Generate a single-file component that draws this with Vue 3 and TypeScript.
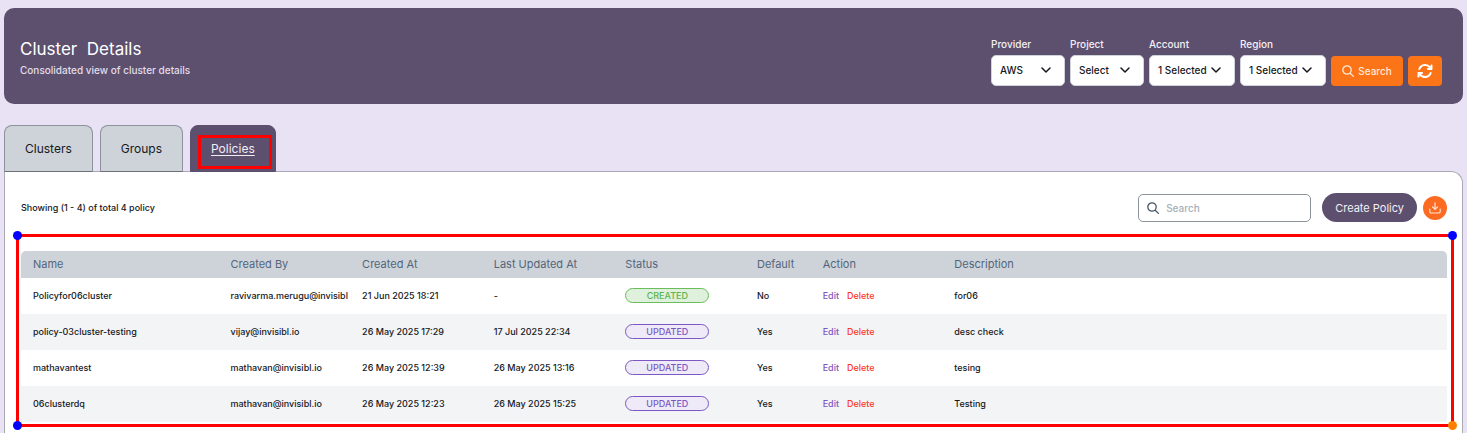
<script setup lang="ts">
import { ref } from 'vue'

interface Filter {
  id: string
  label: string
  value: string
  wide: boolean
}

interface Policy {
  name: string
  createdBy: string
  createdAt: string
  updatedAt: string
  status: 'CREATED' | 'UPDATED'
  isDefault: string
  description: string
}

const filters: Filter[] = [
  { id: 'provider', label: 'Provider', value: 'AWS', wide: false },
  { id: 'project', label: 'Project', value: 'Select', wide: false },
  { id: 'account', label: 'Account', value: '1 Selected', wide: true },
  { id: 'region', label: 'Region', value: '1 Selected', wide: true },
]

const tabs: string[] = ['Clusters', 'Groups', 'Policies']
const activeTab = ref('Policies')
const query = ref('')
const title = 'Cluster \u00a0Details'

const policies: Policy[] = [
  { name: 'Policyfor06cluster', createdBy: 'ravivarma.merugu@invisibl', createdAt: '21 Jun 2025 18:21', updatedAt: '-', status: 'CREATED', isDefault: 'No', description: 'for06' },
  { name: 'policy-03cluster-testing', createdBy: 'vijay@invisibl.io', createdAt: '26 May 2025 17:29', updatedAt: '17 Jul 2025 22:34', status: 'UPDATED', isDefault: 'Yes', description: 'desc check' },
  { name: 'mathavantest', createdBy: 'mathavan@invisibl.io', createdAt: '26 May 2025 12:39', updatedAt: '26 May 2025 13:16', status: 'UPDATED', isDefault: 'Yes', description: 'tesing' },
  { name: '06clusterdq', createdBy: 'mathavan@invisibl.io', createdAt: '26 May 2025 12:23', updatedAt: '26 May 2025 15:25', status: 'UPDATED', isDefault: 'Yes', description: 'Testing' },
]
</script>

<template>
  <div class="page">
    <header class="banner">
      <div class="heading">
        <h1>{{ title }}</h1>
        <p>Consolidated view of cluster details</p>
      </div>
      <form class="filters" @submit.prevent>
        <div v-for="f in filters" :key="f.id" class="field" :class="{ wide: f.wide }">
          <label :for="f.id">{{ f.label }}</label>
          <div class="select-box">
            <select :id="f.id">
              <option>{{ f.value }}</option>
            </select>
            <svg class="chevron" viewBox="0 0 10 6" aria-hidden="true"><path d="M1 1l4 4 4-4" /></svg>
          </div>
        </div>
        <button class="orange search-btn" type="submit">
          <svg class="icon-12" viewBox="0 0 12 12" aria-hidden="true"><circle cx="5" cy="5" r="4.2" /><path d="M8.2 8.2l3.2 3.2" /></svg>
          <span>Search</span>
        </button>
        <button class="orange refresh-btn" type="button" aria-label="Refresh">
          <svg viewBox="0 0 512 512" aria-hidden="true">
            <path d="M105.100 202.600c7.700-21.800 20.200-42.300 37.800-59.800c62.500-62.500 163.800-62.500 226.300 0L386.300 160 352 160c-17.700 0-32 14.300-32 32s14.300 32 32 32l111.500 0c0 0 0 0 0 0l.4 0c17.700 0 32-14.300 32-32l0-112c0-17.700-14.300-32-32-32s-32 14.300-32 32l0 35.200L414.400 97.600c-87.500-87.500-229.300-87.500-316.800 0C73.200 122 55.600 150.700 44.800 181.400c-5.900 16.700 2.900 34.900 19.500 40.800s34.900-2.900 40.800-19.500zM39 289.300c-5 1.500-9.800 4.200-13.700 8.200c-4 4-6.700 8.800-8.100 14c-.3 1.200-.6 2.500-.8 3.800c-.3 1.700-.4 3.400-.4 5.100L16 432c0 17.700 14.300 32 32 32s32-14.300 32-32l0-35.100 17.600 17.500c87.500 87.400 229.300 87.400 316.700 0c24.400-24.400 42.100-53.100 52.900-83.800c5.900-16.700-2.900-34.900-19.500-40.800s-34.900 2.900-40.800 19.500c-7.700 21.800-20.200 42.300-37.800 59.800c-62.500 62.500-163.800 62.500-226.300 0l-.1-.1L125.600 352l34.400 0c17.700 0 32-14.300 32-32s-14.300-32-32-32L48.400 288c-1.600 0-3.200 .1-4.800 .3s-3.100 .5-4.600 1z" />
          </svg>
        </button>
      </form>
    </header>

    <nav class="tabs">
      <button
        v-for="t in tabs"
        :key="t"
        type="button"
        class="tab"
        :class="{ active: t === activeTab }"
        @click="activeTab = t"
      >
        <span>{{ t }}</span>
      </button>
    </nav>

    <main class="panel">
      <div class="toolbar">
        <p class="count">Showing (1 - 4) of total 4 policy</p>
        <div class="search-box">
          <svg class="icon-12" viewBox="0 0 12 12" aria-hidden="true"><circle cx="5" cy="5" r="4.2" /><path d="M8.200 8.200l3.200 3.200" /></svg>
          <input v-model="query" type="text" placeholder="Search" aria-label="Search policies" />
        </div>
        <button class="create" type="button">Create Policy</button>
        <button class="download" type="button" aria-label="Download">
          <svg viewBox="0 0 12 12" aria-hidden="true"><path d="M6 .8v6.400M3.600 5L6 7.400 8.400 5M.8 7.200v2.400a1.400 1.400 0 0 0 1.400 1.400h7.600a1.400 1.400 0 0 0 1.400-1.400V7.200" /></svg>
        </button>
      </div>

      <div class="outlined">
        <table>
          <colgroup>
            <col class="w-name" />
            <col class="w-mid" />
            <col class="w-mid" />
            <col class="w-mid" />
            <col class="w-mid" />
            <col class="w-small" />
            <col class="w-mid" />
            <col />
          </colgroup>
          <thead>
            <tr>
              <th>Name</th>
              <th>Created By</th>
              <th>Created At</th>
              <th>Last Updated At</th>
              <th>Status</th>
              <th>Default</th>
              <th>Action</th>
              <th>Description</th>
            </tr>
          </thead>
          <tbody>
            <tr v-for="p in policies" :key="p.name">
              <td>{{ p.name }}</td>
              <td>{{ p.createdBy }}</td>
              <td>{{ p.createdAt }}</td>
              <td>{{ p.updatedAt }}</td>
              <td><span class="badge" :class="p.status.toLowerCase()">{{ p.status }}</span></td>
              <td>{{ p.isDefault }}</td>
              <td>
                <div class="actions">
                  <a href="#" class="edit">Edit</a>
                  <a href="#" class="delete">Delete</a>
                </div>
              </td>
              <td>{{ p.description }}</td>
            </tr>
          </tbody>
        </table>
        <i class="handle top left"></i>
        <i class="handle top right"></i>
        <i class="handle bottom left"></i>
        <i class="handle bottom right last"></i>
      </div>
    </main>
  </div>
</template>

<style>
body {
  background: #e9e2f4;
}
</style>

<style scoped>
.page {
  box-sizing: border-box;
  display: flex;
  flex-direction: column;
  min-height: 100vh;
  padding: 8px 4px 0;
  background: #e9e2f4;
  color: #16181d;
  font-family: Inter, "Liberation Sans", sans-serif;
  font-size: 9px;
}
.page *,
.page *::before {
  box-sizing: border-box;
}
h1,
p {
  margin: 0;
  font-weight: 400;
}
button,
select,
input {
  font-family: inherit;
  margin: 0;
}
button {
  cursor: pointer;
}
.banner {
  display: flex;
  align-items: center;
  justify-content: space-between;
  min-height: 96px;
  padding: 0 21px 0 16px;
  border-radius: 10px;
  background: #5d4f6e;
  color: #fff;
}
.heading {
  display: flex;
  flex-direction: column;
  gap: 2px;
  padding-top: 2px;
}
h1 {
  font-size: 17px;
  line-height: 24px;
}
.heading p {
  font-size: 10px;
  font-weight: 500;
  line-height: 14px;
  color: #e2dde8;
}
.filters {
  display: flex;
  align-items: flex-end;
  gap: 5px;
  padding-top: 10px;
}
.field {
  display: flex;
  flex-direction: column;
  gap: 4px;
  width: 74px;
}
.field.wide {
  width: 86px;
}
.field label {
  font-size: 10px;
  font-weight: 500;
  line-height: 14px;
  color: #f3f0f6;
}
.select-box {
  display: grid;
  align-items: center;
}
.select-box > * {
  grid-area: 1 / 1;
}
select {
  appearance: none;
  width: 100%;
  height: 31px;
  padding: 0 8px;
  border: 1px solid #cfd3da;
  border-radius: 5px;
  background: #fff;
  color: #16181d;
  font-size: 10px;
  font-weight: 500;
}
.chevron {
  justify-self: end;
  width: 10px;
  height: 6px;
  margin-right: 14px;
  fill: none;
  stroke: #16181d;
  stroke-width: 1.5;
  stroke-linecap: round;
  stroke-linejoin: round;
  pointer-events: none;
}
.orange {
  display: flex;
  align-items: center;
  justify-content: center;
  height: 30px;
  padding: 0;
  border: 0;
  border-radius: 4px;
  background: #fb7417;
  color: #ffe9d6;
  font-size: 10px;
  font-weight: 500;
}
.search-btn {
  gap: 4px;
  width: 72px;
}
.refresh-btn {
  width: 34px;
}
.refresh-btn svg {
  width: 16px;
  height: 16px;
  fill: #fff;
}
.icon-12 {
  flex: none;
  width: 12px;
  height: 12px;
  fill: none;
  stroke: currentColor;
  stroke-width: 1.3;
  stroke-linecap: round;
}
.tabs {
  display: flex;
  gap: 7px;
  margin-top: 21px;
}
.tab {
  position: relative;
  height: 47px;
  padding: 0 20px;
  border: 1px solid #8d939d;
  border-bottom-color: #6b7079;
  border-radius: 8px 8px 0 0;
  background: #ced3da;
  color: #16181d;
  font-size: 12px;
}
.tab.active {
  border-color: #5d4f6e;
  background: #5d4f6e;
  color: #f0edf3;
  text-decoration: underline;
  text-underline-offset: 2px;
}
.tab.active::before {
  content: "";
  position: absolute;
  inset: 9px 3px 2px 7px;
  border: 3px solid #f00;
}
.panel {
  flex: 1;
  margin-top: -1px;
  padding: 21px 8px 5px 11px;
  border: 1px solid #a9a9b6;
  border-bottom: 0;
  border-radius: 0 12px 0 0;
  background: #fff;
}
.toolbar {
  display: flex;
  align-items: center;
  padding: 0 7px 0 5px;
}
.count {
  flex: 1;
  font-weight: 500;
}
.search-box {
  display: flex;
  align-items: center;
  gap: 7px;
  width: 173px;
  height: 28px;
  padding: 0 8px;
  border: 1px solid #8d949e;
  border-radius: 5px;
  color: #46566a;
}
.search-box input {
  flex: 1;
  min-width: 0;
  padding: 0;
  border: 0;
  outline: 0;
  background: none;
  color: #16181d;
  font-size: 10px;
  font-weight: 500;
}
.search-box input::placeholder {
  color: #a5afbc;
}
.create {
  height: 29px;
  margin-left: 11px;
  padding: 0 13px;
  border: 0;
  border-radius: 15px;
  background: #5d4f6e;
  color: #f3f0f6;
  font-size: 11px;
}
.download {
  display: grid;
  place-items: center;
  width: 24px;
  height: 24px;
  margin-left: 6px;
  padding: 0;
  border: 0;
  border-radius: 50%;
  background: #fd6b22;
}
.download svg {
  width: 12px;
  height: 12px;
  fill: none;
  stroke: #ffe3d3;
  stroke-width: 1.2;
  stroke-linecap: round;
  stroke-linejoin: round;
}
.outlined {
  position: relative;
  margin-top: 12px;
  padding: 14px 4px 2px 2px;
  border: 3px solid #f00;
}
.handle {
  position: absolute;
  width: 9px;
  height: 9px;
  border-radius: 50%;
  background: #00f;
}
.handle.last {
  background: #ff8000;
}
.top {
  top: -6px;
}
.bottom {
  bottom: -6px;
}
.left {
  left: -6px;
}
.right {
  right: -6px;
}
table {
  width: 100%;
  table-layout: fixed;
  border-collapse: separate;
  border-spacing: 0;
}
.w-name {
  width: 13.85%;
}
.w-mid {
  width: 9.23%;
}
.w-small {
  width: 4.61%;
}
th {
  height: 27px;
  padding: 0 0 1px 12px;
  background: #ced3da;
  color: #52667a;
  font-size: 11px;
  font-weight: 400;
  text-align: left;
  white-space: nowrap;
}
th:first-child {
  border-top-left-radius: 5px;
}
th:last-child {
  border-top-right-radius: 5px;
}
td {
  height: 36px;
  padding: 0 0 2px 12px;
  font-weight: 500;
  white-space: nowrap;
}
tbody tr:nth-child(even) {
  background: #f3f4f6;
}
.badge {
  display: block;
  width: 84px;
  height: 15px;
  border: 1px solid;
  border-radius: 8px;
  line-height: 13px;
  text-align: center;
}
.badge.created {
  border-color: #6bbd5b;
  background: #dff0dc;
  color: #5cb54c;
}
.badge.updated {
  border-color: #7d58c4;
  background: #efeaf8;
  color: #7d58c4;
}
.actions {
  display: flex;
  gap: 8px;
}
.actions a {
  text-decoration: none;
}
.edit {
  color: #7d58c4;
}
.delete {
  color: #fb3a1e;
}
</style>
